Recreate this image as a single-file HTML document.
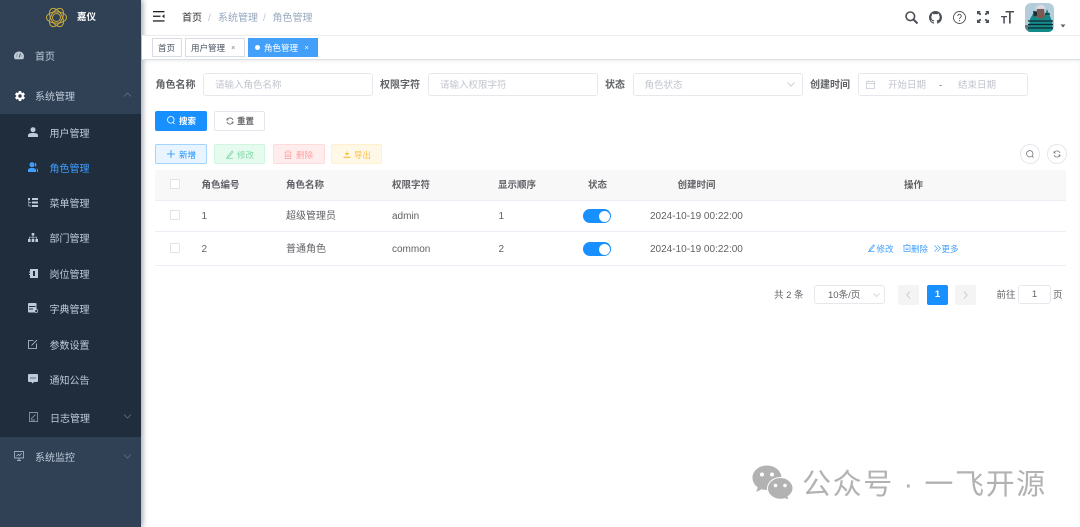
<!DOCTYPE html>
<html><head><meta charset="utf-8">
<style>
*{box-sizing:border-box;margin:0;padding:0}
html,body{width:1080px;height:527px;overflow:hidden;background:#fff}
body{position:relative;font-family:"Liberation Sans","Noto Sans CJK SC",sans-serif;font-size:10px;color:#606266;filter:blur(.3px)}
.a{position:absolute;white-space:nowrap}
.t{position:absolute;white-space:nowrap;line-height:14px;height:14px}
.box{position:absolute;border:1px solid #e6e8ee;border-radius:3px;background:#fff}
.ph{color:#c0c4cc;font-size:9.5px}
.lb{font-weight:700;font-size:10px;color:#606266}
.m{color:#bfcbd9;font-size:10px}
.th{font-weight:700;font-size:9.5px;color:#606266}
svg{position:absolute;overflow:visible}
.ck{position:absolute;width:10px;height:10px;border:1px solid #e2e4e9;border-radius:1px;background:#fff;left:170px}
.sw{position:absolute;left:583px;width:28px;height:14px;border-radius:7px;background:#1890ff}
.sw i{position:absolute;right:1.5px;top:1.5px;width:11px;height:11px;border-radius:50%;background:#fff}
.line{position:absolute;left:155px;width:911px;height:1px;background:#ebeef5}
.lk{color:#409eff;font-size:8.5px}
</style></head><body>

<!-- main side strip -->
<div class="a" style="left:1078px;top:36px;width:2px;height:491px;background:#fbfbfb"></div>

<!-- sidebar -->
<div class="a" style="left:0;top:0;width:141px;height:527px;background:#304156;box-shadow:2px 0 5px rgba(0,21,41,.35)"></div>
<div class="a" style="left:0;top:114px;width:141px;height:323px;background:#1f2d3d"></div>

<svg style="left:46px;top:7px" width="21" height="21" viewBox="0 0 21 21" fill="none" stroke="#c7a93a" stroke-width="1">
<ellipse cx="10.5" cy="10.5" rx="10" ry="5.6"/>
<ellipse cx="10.5" cy="10.5" rx="10" ry="5.6" transform="rotate(60 10.5 10.5)"/>
<ellipse cx="10.5" cy="10.5" rx="10" ry="5.6" transform="rotate(120 10.5 10.5)"/>
<circle cx="10.5" cy="10.5" r="4"/>
</svg>
<div class="t" style="left:77px;top:10.5px;color:#fff;font-weight:700;font-size:9.5px">嘉仪</div>

<!-- menu icons -->
<svg style="left:14px;top:51px" width="10" height="9" viewBox="0 0 10 9"><path d="M5 .5C2.2.5 0 2.7 0 5.3c0 1.1.3 2.1.9 2.9h8.2c.6-.8.9-1.8.9-2.9C10 2.7 7.800.5 5 .5z" fill="#bfcbd9"/><path d="M5 6.500 6.500 2.500M2 5h.8M7.400 5h.8M3 2.800l.5.5" stroke="#304156" stroke-width=".8"/></svg>
<div class="t m" style="left:35px;top:51px">首页</div>

<svg style="left:13.500px;top:89.500px" width="12" height="12" viewBox="0 0 24 24"><path fill="#fff" d="M19.400 13c0-.3.100-.7.100-1s0-.7-.1-1l2.100-1.600c.2-.2.2-.4.100-.6l-2-3.500c-.1-.2-.4-.3-.6-.2l-2.500 1c-.5-.4-1.100-.7-1.700-1L14.400 2.400c0-.2-.2-.4-.5-.4h-4c-.2 0-.4.200-.5.400L9 5.100c-.6.200-1.200.600-1.700 1L4.800 5.100c-.2-.1-.5 0-.6.200l-2 3.500c-.1.200-.1.500.100.600L4.500 11c0 .3-.1.700-.1 1s0 .7.100 1l-2.100 1.600c-.2.200-.2.400-.1.600l2 3.500c.1.200.4.300.6.200l2.500-1c.5.400 1.100.700 1.700 1l.4 2.700c0 .2.200.4.500.400h4c.2 0 .4-.2.500-.4l.4-2.700c.6-.2 1.200-.6 1.700-1l2.500 1c.2.100.5 0 .6-.2l2-3.500c.1-.2.100-.4-.1-.6L19.400 13zM12 15.500a3.500 3.500 0 1 1 0-7 3.500 3.500 0 0 1 0 7z"/></svg>
<div class="t m" style="left:35px;top:90.500px">系统管理</div>
<svg style="left:123px;top:92px" width="9" height="5" viewBox="0 0 9 5" fill="none" stroke="#5f6f82" stroke-width=".8"><path d="M1 4.500 4.500 1 8 4.500"/></svg>

<svg style="left:28px;top:127px" width="10" height="10" viewBox="0 0 10 10" fill="#bfcbd9"><circle cx="5" cy="2.700" r="2.500"/><path d="M0 10V8.200C0 6.700 2 6 5 6s5 .7 5 2.200V10z"/></svg>
<div class="t m" style="left:49.500px;top:127.500px">用户管理</div>

<svg style="left:28px;top:162px" width="10" height="10" viewBox="0 0 10 10" fill="#409eff"><circle cx="4" cy="2.700" r="2.500"/><path d="M0 10V8C0 6.500 1.500 6 4 6s4 .5 4 2v2z"/><path d="M7 .5a2.500 2.500 0 0 1 0 4.500zM8.500 6.200C9.500 6.600 10 7.200 10 8v2H9V8c0-.7-.2-1.300-.5-1.800z"/></svg>
<div class="t" style="left:49.500px;top:162.500px;color:#409eff;font-size:10px">角色管理</div>

<svg style="left:28px;top:198px" width="10" height="9" viewBox="0 0 10 9" fill="#bfcbd9"><rect x="0" y="0" width="2" height="2"/><rect x="4" y="0" width="6" height="2"/><rect x="4" y="3.500" width="6" height="2"/><rect x="4" y="7" width="6" height="2"/><path d="M.8 2v6h2.500M.8 4.500h2.500" fill="none" stroke="#bfcbd9" stroke-width=".7"/></svg>
<div class="t m" style="left:49.500px;top:198px">菜单管理</div>

<svg style="left:28px;top:233px" width="10" height="9" viewBox="0 0 10 9" fill="#bfcbd9"><rect x="3.700" y="0" width="2.600" height="2.500"/><rect x="0" y="6" width="2.600" height="3"/><rect x="3.700" y="6" width="2.600" height="3"/><rect x="7.400" y="6" width="2.600" height="3"/><path d="M5 2.500V6M1.300 6V4.200h7.400V6" fill="none" stroke="#bfcbd9" stroke-width=".7"/></svg>
<div class="t m" style="left:49.500px;top:233px">部门管理</div>

<svg style="left:29px;top:269px" width="9" height="9" viewBox="0 0 9 9"><rect x="1" y="0" width="8" height="9" fill="#bfcbd9"/><rect x="0" y="2.500" width="1.500" height="1" fill="#bfcbd9"/><rect x="0" y="5" width="1.500" height="1" fill="#bfcbd9"/><rect x="4" y="2" width="2" height="5" fill="#1f2d3d"/></svg>
<div class="t m" style="left:49.500px;top:268.500px">岗位管理</div>

<svg style="left:28px;top:303px" width="10" height="10" viewBox="0 0 10 10"><rect x="0" y="0" width="8.500" height="9.500" rx="1" fill="#bfcbd9"/><rect x="1" y="3" width="6.500" height="1" fill="#1f2d3d"/><rect x="1" y="5.500" width="4" height="1" fill="#1f2d3d"/><circle cx="8.300" cy="8" r="1.500" fill="#1f2d3d" stroke="#bfcbd9" stroke-width=".7"/></svg>
<div class="t m" style="left:49.500px;top:303.500px">字典管理</div>

<svg style="left:28px;top:339px" width="10" height="10" viewBox="0 0 10 10" fill="none" stroke="#bfcbd9" stroke-width=".8"><path d="M5.500 1.500H.5v8h8V4.500"/><path d="M3.500 6.500 9 1"/></svg>
<div class="t m" style="left:49.500px;top:339.500px">参数设置</div>

<svg style="left:28px;top:374px" width="10" height="10" viewBox="0 0 10 10"><path d="M1 0h8a1 1 0 0 1 1 1v6a1 1 0 0 1-1 1H6L4.500 9.500 3.500 8H1a1 1 0 0 1-1-1V1a1 1 0 0 1 1-1z" fill="#bfcbd9"/><circle cx="3" cy="4" r=".6" fill="#1f2d3d"/><circle cx="5" cy="4" r=".6" fill="#1f2d3d"/><circle cx="7" cy="4" r=".6" fill="#1f2d3d"/></svg>
<div class="t m" style="left:49.500px;top:374.500px">通知公告</div>

<svg style="left:29px;top:412px" width="9" height="10" viewBox="0 0 9 10" fill="none" stroke="#a3afbd" stroke-width=".7"><path d="M.5.500h8v9h-8z"/><path d="M2 7 6.500 2.500M2 8h4"/></svg>
<div class="t m" style="left:50px;top:412.500px">日志管理</div>
<svg style="left:123px;top:414px" width="9" height="5" viewBox="0 0 9 5" fill="none" stroke="#5f6f82" stroke-width=".8"><path d="M1 .5 4.500 4 8 .5"/></svg>

<svg style="left:14px;top:451px" width="10" height="10" viewBox="0 0 10 10" fill="none" stroke="#bfcbd9" stroke-width=".7"><path d="M.5.500h9v6.500h-9zM3 9.500h4M5 7v2.500M2.500 5l2-1.500 1.200 1L7.500 2.500"/></svg>
<div class="t m" style="left:35px;top:451.500px">系统监控</div>
<svg style="left:123px;top:454px" width="9" height="5" viewBox="0 0 9 5" fill="none" stroke="#5f6f82" stroke-width=".8"><path d="M1 .5 4.500 4 8 .5"/></svg>

<!-- navbar -->
<div class="a" style="left:142px;top:35px;width:938px;height:1px;background:#f0f0f0"></div>
<svg style="left:153px;top:11px" width="12" height="11" viewBox="0 0 12 11" fill="#222"><rect x="0" y="0" width="11.500" height="1.300"/><rect x="0" y="4.600" width="7.500" height="1.300"/><rect x="0" y="9.300" width="11.500" height="1.300"/><path d="M11.500 3.300v4L9 5.300z"/></svg>
<div class="t" style="left:182px;top:11.500px;font-size:10px;color:#303133">首页</div>
<div class="t" style="left:208px;top:11.500px;font-size:10px;color:#c0c4cc">/</div>
<div class="t" style="left:218px;top:11.500px;font-size:10px;color:#97a8be">系统管理</div>
<div class="t" style="left:263px;top:11.500px;font-size:10px;color:#c0c4cc">/</div>
<div class="t" style="left:272.500px;top:11.500px;font-size:10px;color:#97a8be">角色管理</div>

<!-- right icons -->
<svg style="left:905px;top:11px" width="13" height="13" viewBox="0 0 13 13" fill="none" stroke="#4b4f56" stroke-width="1.600"><circle cx="5.300" cy="5.300" r="4.300"/><path d="M8.500 8.500 12.500 12.500" stroke-width="2"/></svg>
<svg style="left:929px;top:11px" width="13" height="13" viewBox="0 0 16 16"><path fill="#4b4f56" d="M8 0C3.580 0 0 3.580 0 8c0 3.540 2.290 6.530 5.470 7.590.4.070.55-.17.550-.38 0-.19-.01-.82-.01-1.490-2.010.37-2.530-.49-2.690-.94-.09-.23-.48-.94-.82-1.130-.28-.15-.68-.52-.01-.53.63-.01 1.080.58 1.230.82.72 1.210 1.870.87 2.330.66.070-.52.280-.87.510-1.070-1.780-.2-3.640-.89-3.640-3.950 0-.87.310-1.590.82-2.150-.08-.2-.36-1.020.08-2.120 0 0 .67-.21 2.200.82.640-.18 1.320-.27 2-.27s1.360.09 2 .27c1.530-1.040 2.200-.82 2.200-.82.440 1.100.16 1.920.08 2.120.51.560.82 1.270.82 2.150 0 3.070-1.870 3.750-3.650 3.950.29.25.54.73.54 1.480 0 1.070-.01 1.930-.01 2.200 0 .21.150.460.550.380A8.010 8.010 0 0 0 16 8c0-4.420-3.580-8-8-8z"/></svg>
<svg style="left:953px;top:11px" width="13" height="13" viewBox="0 0 13 13" fill="none" stroke="#4b4f56" stroke-width=".9"><circle cx="6.500" cy="6.500" r="6"/><path d="M4.700 5a1.800 1.800 0 1 1 2.700 1.600c-.6.300-.9.700-.9 1.400"/><path d="M6.500 9.200v1" stroke-width="1.100"/></svg>
<svg style="left:977px;top:11px" width="12" height="12" viewBox="0 0 12 12" fill="#4b4f56"><path d="M0 0h3.800L2.600 1.200 4.400 3 3 4.400 1.200 2.600 0 3.800zM12 0v3.800L10.800 2.600 9 4.400 7.600 3l1.800-1.800L8.200 0zM0 12V8.200l1.200 1.200L3 7.600 4.400 9 2.600 10.800 3.800 12zM12 12H8.200l1.200-1.200L7.600 9 9 7.600l1.800 1.800L12 8.200z"/></svg>
<svg style="left:1001px;top:11px" width="13" height="13" viewBox="0 0 13 13" fill="#4b4f56"><path d="M4.500 0H13v1.500H9.700V12.500H8V1.500H4.500zM0 5h6v1.300H3.800v6.200H2.300V6.300H0z"/></svg>

<!-- avatar -->
<svg style="left:1025px;top:3px" width="29" height="29" viewBox="0 0 29 29">
<clipPath id="av"><rect width="29" height="29" rx="6"/></clipPath>
<g clip-path="url(#av)">
<rect width="29" height="29" fill="#b4cddb"/>
<rect y="22" width="9" height="7" fill="#5f7882"/>
<path d="M3 29 5 16 9 9 13 15 19 14 22 6 27 18 28 29z" fill="#128a8a"/>
<path d="M3 18h25M3 21.500h25M3 25h25M20 11h5" stroke="#10262e" stroke-width="1.200"/>
<path d="M11 14 12 6h7l1 8-4 2z" fill="#7a5a50"/>
<path d="M10.500 6c1-5 9-5.500 10-.5z" fill="#dcdbe4"/>
<path d="M8 8l4 .5v4l-3 1z" fill="#1d2a33"/>
</g>
</svg>
<svg style="left:1060px;top:24px" width="6" height="4" viewBox="0 0 6 4"><path d="M.5.500h5L3 3.500z" fill="#5a5e66"/></svg>

<!-- tags bar -->
<div class="a" style="left:142px;top:36px;width:938px;height:24px;background:#fff;border-bottom:1px solid #dcdfe4;box-shadow:0 1px 3px rgba(0,0,0,.08)"></div>
<div class="box" style="left:152px;top:38px;width:30px;height:19px;border-radius:0;border-color:#d8dce5"></div>
<div class="t" style="left:158px;top:41px;font-size:8.500px;color:#495060">首页</div>
<div class="box" style="left:185px;top:38px;width:60px;height:19px;border-radius:0;border-color:#d8dce5"></div>
<div class="t" style="left:191px;top:41px;font-size:8.500px;color:#495060">用户管理</div>
<div class="t" style="left:231px;top:41px;font-size:7.500px;color:#7a7f88">×</div>
<div class="a" style="left:248px;top:38px;width:70px;height:19px;background:#42a0fb"></div>
<div class="a" style="left:254.500px;top:45px;width:5px;height:5px;border-radius:50%;background:#fff"></div>
<div class="t" style="left:264px;top:41px;font-size:8.500px;color:#fff">角色管理</div>
<div class="t" style="left:304.500px;top:41px;font-size:7.500px;color:#fff">×</div>

<!-- search form -->
<div class="t lb" style="left:155.500px;top:79px">角色名称</div>
<div class="box" style="left:203px;top:73px;width:170px;height:23px"></div>
<div class="t ph" style="left:215px;top:79px">请输入角色名称</div>
<div class="t lb" style="left:380px;top:79px">权限字符</div>
<div class="box" style="left:428px;top:73px;width:170px;height:23px"></div>
<div class="t ph" style="left:440px;top:79px">请输入权限字符</div>
<div class="t lb" style="left:605px;top:79px">状态</div>
<div class="box" style="left:633px;top:73px;width:170px;height:23px"></div>
<div class="t ph" style="left:644.500px;top:79px">角色状态</div>
<svg style="left:787px;top:82px" width="8" height="5" viewBox="0 0 8 5" fill="none" stroke="#c0c4cc" stroke-width=".8"><path d="M.5.500 4 4 7.500.5"/></svg>
<div class="t lb" style="left:810px;top:79px">创建时间</div>
<div class="box" style="left:858px;top:73px;width:170px;height:23px"></div>
<svg style="left:866px;top:80px" width="9" height="9" viewBox="0 0 9 9" fill="none" stroke="#c8ccd3" stroke-width=".8"><path d="M.5 1.500h8v7h-8zM.5 3.500h8M2.500.5v1.500M6.500.5v1.500"/></svg>
<div class="t ph" style="left:888px;top:79px">开始日期</div>
<div class="t" style="left:939px;top:79px;font-size:9.500px;color:#606266">-</div>
<div class="t ph" style="left:958px;top:79px">结束日期</div>

<!-- search buttons -->
<div class="a" style="left:155px;top:111px;width:52px;height:20px;background:#1890ff;border-radius:2px"></div>
<svg style="left:167px;top:116px" width="8" height="9" viewBox="0 0 8 9" fill="none" stroke="#fff" stroke-width=".8"><circle cx="3.800" cy="3.800" r="3.300"/><path d="M6 6.200 7.500 8"/></svg>
<div class="t" style="left:179px;top:114px;font-size:8.500px;color:#fff;font-weight:700">搜索</div>
<div class="box" style="left:214px;top:111px;width:51px;height:20px;border-radius:2px;border-color:#e4e7ed"></div>
<svg style="left:225.500px;top:116.500px" width="8" height="8" viewBox="0 0 8 8" fill="none" stroke="#606266" stroke-width=".8"><path d="M7 3A3.200 3.200 0 0 0 1 3M1 5a3.200 3.200 0 0 0 6 0M1 1.500V3h1.500M7 6.500V5H5.500"/></svg>
<div class="t" style="left:237px;top:114px;font-size:8.500px;color:#606266;font-weight:700">重置</div>

<!-- action buttons -->
<div class="a" style="left:155px;top:144px;width:52px;height:20px;background:#e8f4ff;border:1px solid #a3d3ff;border-radius:2px"></div>
<svg style="left:167px;top:150px" width="8" height="8" viewBox="0 0 8 8" stroke="#1890ff" stroke-width=".8"><path d="M4 0v8M0 4h8"/></svg>
<div class="t" style="left:179px;top:147.500px;font-size:8.500px;color:#1890ff">新增</div>
<div class="a" style="left:214px;top:144px;width:51px;height:20px;background:#e7faf0;border:1px solid #d0f5e0;border-radius:2px"></div>
<svg style="left:225.500px;top:149.500px" width="8" height="9" viewBox="0 0 8 9" fill="none" stroke="#7fdaa6" stroke-width=".8"><path d="M1.500 6.500 6 1l1 1-4.500 5.500H1zM0 8.500h7"/></svg>
<div class="t" style="left:237px;top:147.500px;font-size:8.500px;color:#7fdaa6">修改</div>
<div class="a" style="left:272.500px;top:144px;width:52px;height:20px;background:#ffeded;border:1px solid #ffdbdb;border-radius:2px"></div>
<svg style="left:284px;top:149.500px" width="8" height="9" viewBox="0 0 8 9" fill="none" stroke="#ffa1a1" stroke-width=".8"><path d="M.5 2h7M1.200 2v6.500h5.600V2M3 .5h2M3 4v2.500h2V4"/></svg>
<div class="t" style="left:296px;top:147.500px;font-size:8.500px;color:#ffa1a1">删除</div>
<div class="a" style="left:331px;top:144px;width:51px;height:20px;background:#fff8e6;border:1px solid #fff1cc;border-radius:2px"></div>
<svg style="left:343px;top:150px" width="8" height="8" viewBox="0 0 8 8" fill="#ffc04d"><path d="M4 0 4.500 3H6.500L4 5.500 1.500 3h2zM.5 6.800h7V8h-7z"/></svg>
<div class="t" style="left:354px;top:147.500px;font-size:8.500px;color:#ffc04d">导出</div>

<!-- circle buttons -->
<div class="a" style="left:1020px;top:144px;width:20px;height:20px;border-radius:50%;border:1px solid #e4e7ed"></div>
<svg style="left:1026px;top:150px" width="8" height="8" viewBox="0 0 8 8" fill="none" stroke="#606266" stroke-width=".7"><circle cx="3.800" cy="3.800" r="3.200"/><path d="M6 6 7.500 7.500"/></svg>
<div class="a" style="left:1047px;top:144px;width:20px;height:20px;border-radius:50%;border:1px solid #e4e7ed"></div>
<svg style="left:1053px;top:150px" width="8" height="8" viewBox="0 0 8 8" fill="none" stroke="#606266" stroke-width=".7"><path d="M7 3A3.200 3.200 0 0 0 1 3M1 5a3.200 3.200 0 0 0 6 0M1 1.500V3h1.500M7 6.500V5H5.500"/></svg>

<!-- table -->
<div class="a" style="left:155px;top:170px;width:911px;height:31px;background:#f8f8f9"></div>
<div class="line" style="top:200px"></div>
<div class="line" style="top:230.500px"></div>
<div class="line" style="top:265px"></div>
<div class="ck" style="top:179px"></div>
<div class="t th" style="left:201.500px;top:179px">角色编号</div>
<div class="t th" style="left:286px;top:179px">角色名称</div>
<div class="t th" style="left:392px;top:179px">权限字符</div>
<div class="t th" style="left:498px;top:179px">显示顺序</div>
<div class="t th" style="left:588px;top:179px">状态</div>
<div class="t th" style="left:677.500px;top:179px">创建时间</div>
<div class="t th" style="left:904px;top:179px">操作</div>

<div class="ck" style="top:210px"></div>
<div class="t" style="left:201.500px;top:210px">1</div>
<div class="t" style="left:286px;top:210px">超级管理员</div>
<div class="t" style="left:392px;top:210px">admin</div>
<div class="t" style="left:498.500px;top:210px">1</div>
<div class="sw" style="top:209px"><i></i></div>
<div class="t" style="left:650px;top:210px">2024-10-19 00:22:00</div>

<div class="ck" style="top:243px"></div>
<div class="t" style="left:201.500px;top:243px">2</div>
<div class="t" style="left:286px;top:243px">普通角色</div>
<div class="t" style="left:392px;top:243px">common</div>
<div class="t" style="left:498.500px;top:243px">2</div>
<div class="sw" style="top:242px"><i></i></div>
<div class="t" style="left:650px;top:243px">2024-10-19 00:22:00</div>
<svg style="left:868px;top:244px" width="8" height="8" viewBox="0 0 8 8" fill="none" stroke="#409eff" stroke-width=".7"><path d="M1.500 5.500 5.500.8l1 .8L2.500 6.500H1.200zM0 7.500h6.500"/></svg>
<div class="t lk" style="left:876.500px;top:242px">修改</div>
<svg style="left:902.500px;top:244px" width="8" height="8" viewBox="0 0 8 8" fill="none" stroke="#409eff" stroke-width=".7"><path d="M.3 1.500h7M1 1.500v6h6v-6M3 .3h2M3 3.500v2h2v-2"/></svg>
<div class="t lk" style="left:911px;top:242px">删除</div>
<svg style="left:933.500px;top:244.500px" width="7" height="7" viewBox="0 0 7 7" fill="none" stroke="#409eff" stroke-width=".7"><path d="M.5.500 3.500 3.500.5 6.500M3.500.5 6.500 3.500 3.500 6.500"/></svg>
<div class="t lk" style="left:941.500px;top:242px">更多</div>

<!-- pagination -->
<div class="t" style="left:774px;top:288.500px;font-size:9.500px">共 2 条</div>
<div class="box" style="left:813.500px;top:285px;width:71px;height:19px;border-color:#e6e8ee"></div>
<div class="t" style="left:828px;top:288.500px;font-size:9.500px">10条/页</div>
<svg style="left:873px;top:293px" width="7" height="4" viewBox="0 0 7 4" fill="none" stroke="#c0c4cc" stroke-width=".7"><path d="M.5.500 3.500 3.500 6.500.5"/></svg>
<div class="a" style="left:898px;top:285px;width:21px;height:19.500px;background:#f4f4f5;border-radius:2px"></div>
<svg style="left:906px;top:291px" width="5" height="8" viewBox="0 0 5 8" fill="none" stroke="#c0c4cc" stroke-width=".8"><path d="M4 .5.800 4 4 7.500"/></svg>
<div class="a" style="left:927px;top:285px;width:21px;height:19.500px;background:#1890ff;border-radius:2px"></div>
<div class="t" style="left:927px;top:288px;width:21px;text-align:center;color:#fff;font-weight:700;font-size:9.500px">1</div>
<div class="a" style="left:955px;top:285px;width:21px;height:19.500px;background:#f4f4f5;border-radius:2px"></div>
<svg style="left:963px;top:291px" width="5" height="8" viewBox="0 0 5 8" fill="none" stroke="#c0c4cc" stroke-width=".8"><path d="M1 .5 4.200 4 1 7.500"/></svg>
<div class="t" style="left:996.500px;top:288.500px;font-size:9.500px">前往</div>
<div class="box" style="left:1018px;top:285px;width:33px;height:19px;border-color:#e6e8ee"></div>
<div class="t" style="left:1018px;top:288px;width:33px;text-align:center;font-size:9.500px">1</div>
<div class="t" style="left:1053px;top:288.500px;font-size:9.500px">页</div>

<!-- watermark -->
<svg style="left:752px;top:465px" width="42" height="35" viewBox="0 0 42 35">
<path d="M15 .5C6.800.5.500 6 .500 12.800c0 3.800 2 7.200 5.200 9.500L4.200 27l5.500-2.800c1.700.5 3.500.7 5.300.7 8.200 0 14.500-5.500 14.500-12.100S23.200.5 15 .5z" fill="#b2b2b2"/>
<circle cx="10" cy="9.500" r="2" fill="#fff"/><circle cx="20" cy="9.500" r="2" fill="#fff"/>
<path d="M28.500 12.500c-7.200 0-13 4.900-13 10.900s5.800 10.900 13 10.900c1.500 0 2.900-.2 4.200-.6l4.300 1.300-1-3.500c3-2 5-4.900 5-8.100 0-6-5.800-10.900-12.500-10.900z" fill="#b2b2b2" stroke="#fff" stroke-width="1"/>
<circle cx="23.500" cy="20.500" r="1.800" fill="#fff"/><circle cx="33" cy="20.500" r="1.800" fill="#fff"/>
</svg>
<div class="a" style="left:802px;top:467px;font-size:29px;line-height:36px;color:#b2b2b2;letter-spacing:1.6px">公众号 · 一飞开源</div>

</body></html>
